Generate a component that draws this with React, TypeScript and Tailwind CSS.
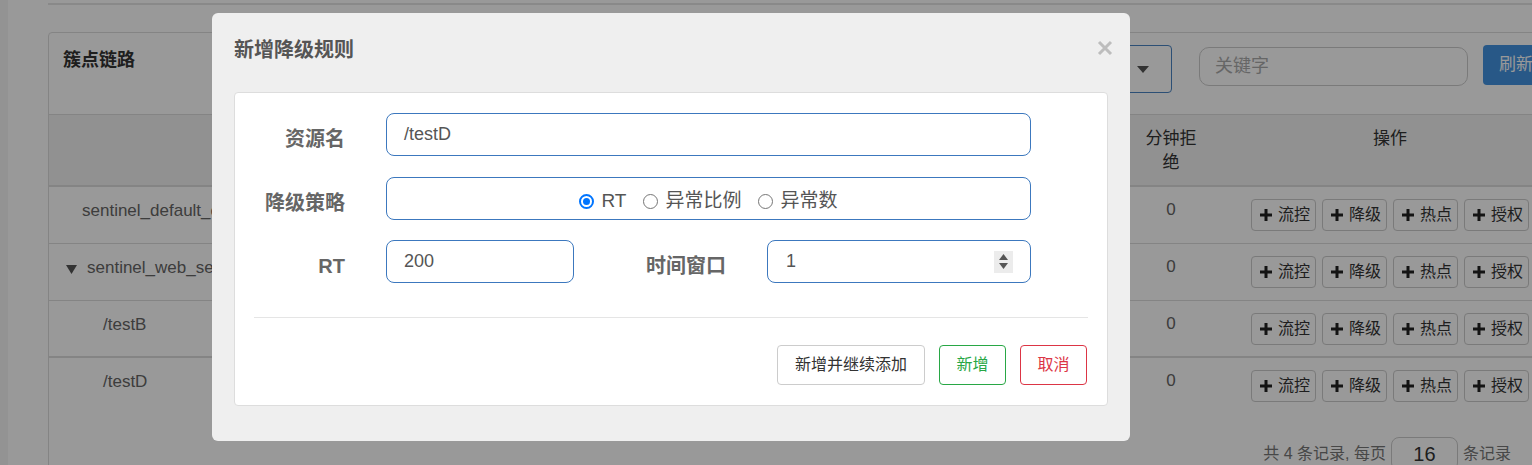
import React from "react";

const rows = [
  { name: "sentinel_default_context", pl: "pl-[33px]", arrow: false, thick: false },
  { name: "sentinel_web_servlet_context", pl: "pl-[17px]", arrow: true, thick: false },
  { name: "/testB", pl: "pl-[54px]", arrow: false, thick: true },
  { name: "/testD", pl: "pl-[54px]", arrow: false, thick: false, last: true },
];

const actions = ["流控", "降级", "热点", "授权"];

const PlusIcon = () => (
  <svg width="12" height="12" viewBox="0 0 12 12" className="shrink-0">
    <path d="M4.5 0h3v4.5H12v3H7.5V12h-3V7.5H0v-3h4.5z" fill="#222" />
  </svg>
);

const Radio = ({ checked, label }: { checked?: boolean; label: string }) => (
  <label className="flex items-center gap-[7px]">
    {checked ? (
      <span className="flex h-[15px] w-[15px] items-center justify-center rounded-full border-2 border-[#0075ff] bg-white">
        <span className="h-[7px] w-[7px] rounded-full bg-[#0075ff]" />
      </span>
    ) : (
      <span className="h-[15px] w-[15px] rounded-full border border-[#767676] bg-white" />
    )}
    <span>{label}</span>
  </label>
);

const FormLabel = ({ text, width }: { text: string; width: string }) => (
  <div className={`${width} pt-[12px] text-right text-[20px] font-bold leading-[28px] text-[#666]`}>
    {text}
  </div>
);

export default function App() {
  return (
    <div className="relative h-[465px] w-[1532px] overflow-hidden bg-white font-['Liberation_Sans','Noto_Sans_CJK_SC',sans-serif] text-[#333]">
      {/* page under the dialog */}
      <div className="flex h-full">
        <div className="h-full w-[8px] shrink-0 bg-[#f6f6f6]" />
        <div className="ml-[40px] shrink-0">
          <div className="h-[5px] w-[1500px] border-b-2 border-[#e4e4e4]" />
          <div className="mt-[27px] w-[1530px] rounded-[4px] border border-[#ddd]">
            <div className="flex h-[82px] items-start border-b border-[#ddd] px-[14px]">
              <div className="pt-[15px] text-[18px] font-bold leading-[24px]">簇点链路</div>
              <div className="ml-auto mt-[12px] flex h-[48px] w-[300px] items-center justify-end rounded-[4px] border border-[#4a84c3] pr-[22px]">
                <svg width="12" height="7" viewBox="0 0 12 7">
                  <path d="M0 0h12L6 7z" fill="#555" />
                </svg>
              </div>
              <div className="ml-[27px] mt-[14px] flex h-[39px] w-[269px] items-center rounded-[10px] border border-[#ccc] pl-[15px] text-[18px] text-[#aaa]">
                关键字
              </div>
              <div className="ml-[15px] mt-[12px] flex h-[40px] w-[80px] items-center rounded-[4px] bg-[#4393e1] pl-[16px] text-[17px] text-white">
                刷新
              </div>
            </div>

            <div className="flex h-[72px] border-b-2 border-[#ddd] bg-[#f2f2f2] text-[17px] leading-[24px]">
              <div className="flex-1" />
              <div className="w-[64px] pt-[12px] text-center">
                分钟拒
                <br />绝
              </div>
              <div className="w-[374px] pt-[12px] text-center">操作</div>
            </div>

            {rows.map((r) => (
              <div
                key={r.name}
                className={`flex h-[57px] text-[17px] leading-[24px] text-[#666] ${
                  r.last ? "" : r.thick ? "border-b-2 border-[#ddd]" : "border-b border-[#ddd]"
                }`}
              >
                <div className={`flex flex-1 items-start gap-[10px] pt-[12px] ${r.pl}`}>
                  {r.arrow && (
                    <svg width="11" height="9" viewBox="0 0 11 9" className="mt-[9px]">
                      <path d="M0 0h11L5.5 9z" fill="#555" />
                    </svg>
                  )}
                  <span>{r.name}</span>
                </div>
                <div className="w-[64px] pt-[11px] text-center">0</div>
                <div className="flex w-[374px] justify-center gap-[6px] pt-[12px]">
                  {actions.map((a) => (
                    <div
                      key={a}
                      className="flex h-[32px] w-[65px] items-center gap-[6px] rounded-[4px] border border-[#ccc] pl-[8px] text-[16px] text-[#333]"
                    >
                      <PlusIcon />
                      {a}
                    </div>
                  ))}
                </div>
              </div>
            ))}

            <div className="mt-[22px] flex items-center justify-end gap-[5px] pb-[20px] pr-[66px] text-[16px] text-[#777]">
              <span>共 4 条记录, 每页</span>
              <div className="flex h-[34px] w-[67px] items-center justify-center rounded-[8px] border border-[#ccc] text-[20px] text-[#333]">
                16
              </div>
              <span>条记录</span>
            </div>
          </div>
        </div>
      </div>

      {/* backdrop */}
      <div className="absolute inset-0 bg-black/40" />

      {/* dialog */}
      <div className="absolute left-[212px] top-[13px] h-[428px] w-[918px] rounded-[6px] bg-[#efefef] px-[22px]">
        <div className="h-[79px] pt-[23px] text-[20px] font-bold leading-[28px] text-[#555]">
          新增降级规则
        </div>
        <button className="absolute right-[17px] top-[27px]">
          <svg width="16" height="16" viewBox="0 0 16 16">
            <path d="M2 2l12 12M14 2L2 14" stroke="#bdbdbd" strokeWidth="3" />
          </svg>
        </button>

        <div className="h-[314px] w-[874px] rounded-[4px] border border-[#ddd] bg-white pt-[20px]">
          <div className="flex h-[43px]">
            <FormLabel text="资源名" width="w-[110px]" />
            <div className="ml-[41px] flex h-[43px] w-[645px] items-center rounded-[8px] border border-[#3c78be] pl-[17px] text-[18px] text-[#555]">
              /testD
            </div>
          </div>

          <div className="mt-[21px] flex h-[43px]">
            <FormLabel text="降级策略" width="w-[110px]" />
            <div className="ml-[41px] flex h-[43px] w-[645px] items-center justify-center gap-[17px] rounded-[8px] border border-[#3c78be] pt-[6px] text-[19px] text-[#555]">
              <Radio checked label="RT" />
              <Radio label="异常比例" />
              <Radio label="异常数" />
            </div>
          </div>

          <div className="mt-[20px] flex h-[43px]">
            <FormLabel text="RT" width="w-[110px]" />
            <div className="ml-[41px] flex h-[43px] w-[188px] items-center rounded-[8px] border border-[#3c78be] pl-[17px] text-[18px] text-[#555]">
              200
            </div>
            <FormLabel text="时间窗口" width="w-[152px]" />
            <div className="ml-[41px] flex h-[43px] w-[264px] items-center justify-between rounded-[8px] border border-[#3c78be] pl-[18px] pr-[17px] text-[18px] text-[#555]">
              <span>1</span>
              <div className="flex h-[22px] w-[19px] flex-col items-center justify-center gap-[3px] bg-[#ececec]">
                <svg width="9" height="6" viewBox="0 0 9 6">
                  <path d="M0 6h9L4.5 0z" fill="#555" />
                </svg>
                <svg width="9" height="6" viewBox="0 0 9 6">
                  <path d="M0 0h9L4.5 6z" fill="#555" />
                </svg>
              </div>
            </div>
          </div>

          <div className="mx-[19px] mt-[34px] h-px bg-[#e5e5e5]" />

          <div className="mt-[27px] flex justify-end gap-[14px] pr-[20px] text-[16px]">
            <button className="h-[40px] w-[148px] rounded-[4px] border border-[#ccc] bg-white text-[#333]">
              新增并继续添加
            </button>
            <button className="h-[40px] w-[67px] rounded-[4px] border border-[#28a745] bg-white text-[#28a745]">
              新增
            </button>
            <button className="h-[40px] w-[67px] rounded-[4px] border border-[#dc3545] bg-white text-[#dc3545]">
              取消
            </button>
          </div>
        </div>
      </div>
    </div>
  );
}
